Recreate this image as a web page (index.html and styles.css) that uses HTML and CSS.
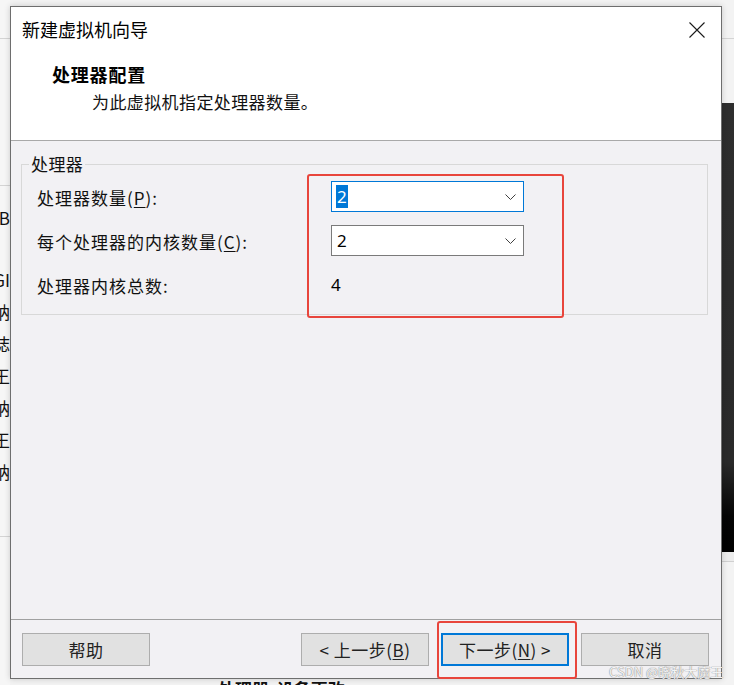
FILE: index.html
```html
<!DOCTYPE html>
<html lang="zh-CN">
<head>
<meta charset="utf-8">
<title>新建虚拟机向导</title>
<link rel="stylesheet" href="styles.css">
</head>
<body>
<div class="desktop">
  <div class="bg">
    <div class="bg-left">
      <div class="seg seg-a"></div>
      <div class="seg seg-b"></div>
      <div class="frag frag-first"><span>内存 8 GB</span></div>
      <div class="frag frag-gap"><span>硬盘 20 GI</span></div>
      <div class="frag"><span>处理器呐</span></div>
      <div class="frag"><span>网络连接梽</span></div>
      <div class="frag"><span>处理器王</span></div>
      <div class="frag"><span>声卡呐</span></div>
      <div class="frag"><span>显示王</span></div>
      <div class="frag"><span>打印机呐</span></div>
      <div class="seg seg-c"></div>
    </div>
    <div class="bg-mid">
      <div class="bg-bottom-text">处理器&nbsp;&nbsp;设备更改</div>
    </div>
    <div class="bg-right">
      <div class="seg seg-a"></div>
      <div class="rseg-light"></div>
      <div class="rseg-dark"></div>
      <div class="rseg-low"></div>
    </div>
  </div>

  <div class="dialog">
    <header class="dlg-header">
      <div class="titlebar">
        <span class="title">新建虚拟机向导</span>
        <svg class="close" width="16" height="16" viewBox="0 0 16 16" aria-label="关闭">
          <path d="M0.5 0.5 L15.5 15.5 M15.5 0.5 L0.5 15.5" stroke="#1a1a1a" stroke-width="1.1" fill="none"/>
        </svg>
      </div>
      <div class="heading">处理器配置</div>
      <div class="subtitle">为此虚拟机指定处理器数量。</div>
    </header>

    <main class="dlg-body">
      <fieldset class="group">
        <legend>处理器</legend>
        <div class="rows">
          <div class="label">处理器数量(<u>P</u>):</div>
          <div class="combo focused">
            <span class="sel">2</span>
            <svg class="chev" width="11" height="6" viewBox="0 0 11 6"><path d="M0.5 0.5 L5.5 5.5 L10.5 0.5" stroke="#404040" stroke-width="1" fill="none"/></svg>
          </div>
          <div class="label">每个处理器的内核数量(<u>C</u>):</div>
          <div class="combo">
            <span class="val">2</span>
            <svg class="chev" width="11" height="6" viewBox="0 0 11 6"><path d="M0.5 0.5 L5.5 5.5 L10.5 0.5" stroke="#404040" stroke-width="1" fill="none"/></svg>
          </div>
          <div class="label">处理器内核总数:</div>
          <div class="total">4</div>
        </div>
      </fieldset>
    </main>

    <footer class="dlg-footer">
      <button class="btn btn-help">帮助</button>
      <button class="btn btn-back">&lt; 上一步(<u>B</u>)</button>
      <button class="btn btn-next">下一步(<u>N</u>) &gt;</button>
      <button class="btn btn-cancel">取消</button>
    </footer>
  </div>

  <div class="mark mark-combo"></div>
  <div class="mark mark-next"></div>
  <div class="watermark">CSDN @晓秋大魔王</div>
</div>
</body>
</html>
```

FILE: styles.css
```css
* { box-sizing: border-box; }

html, body {
  margin: 0;
  padding: 0;
}

body {
  font-family: "Noto Sans CJK SC", "Noto Sans", sans-serif;
  color: #000;
  background: #f3f3f3;
}

.desktop {
  position: relative;
  width: 734px;
  height: 685px;
  overflow: hidden;
  background: #f3f3f3;
}

/* ---------- background window behind the dialog ---------- */
.bg {
  display: grid;
  grid-template-columns: 10px 1fr 12px;
  height: 685px;
}

.bg-left {
  display: flex;
  flex-direction: column;
  overflow: hidden;
  background: #f6f6f6;
}

.seg { flex: none; }
.seg-a { height: 39px; border-bottom: 1px solid #d4d4d4; }
.seg-b { height: 147px; border-bottom: 1px solid #d4d4d4; }
.seg-c { margin-top: 48px; border-bottom: 1px solid #d4d4d4; }

.frag {
  display: flex;
  justify-content: flex-end;
  white-space: nowrap;
  font-size: 17px;
  line-height: 32px;
  height: 32px;
  color: #111;
}
.frag-first { margin-top: 16px; }
.frag-gap { margin-top: 30px; }

.bg-mid {
  display: flex;
  flex-direction: column;
  justify-content: flex-end;
}

.bg-bottom-text {
  margin-left: 208px;
  font-size: 17px;
  font-weight: bold;
  line-height: 20px;
  margin-bottom: -14px;
  color: #111;
  white-space: nowrap;
}

.bg-right {
  display: flex;
  flex-direction: column;
  background: #f3f3f3;
}
.rseg-light { height: 64px; flex: none; }
.rseg-dark {
  height: 449px;
  flex: none;
  background: linear-gradient(#2e2e2e 0%, #2a2a2a 80%, #050505 92%, #000 100%);
}
.rseg-low {
  flex: none;
  height: 10px;
  border-bottom: 1px solid #d0d0d0;
  background: #ececec;
}

/* ---------- dialog window ---------- */
.dialog {
  position: absolute;
  left: 10px;
  top: 6px;
  width: 712px;
  height: 673px;
  border: 1px solid #6e6e6e;
  display: flex;
  flex-direction: column;
  background: #f2f1f4;
  box-shadow: 0 0 6px rgba(0, 0, 0, 0.18);
}

.dlg-header {
  flex: none;
  height: 134px;
  background: #fff;
  border-bottom: 1px solid #a9a9a9;
  padding: 11px 16px 0 11px;
}

.titlebar {
  display: flex;
  justify-content: space-between;
  align-items: center;
  height: 22px;
}

.title {
  font-size: 18px;
  line-height: 22px;
  color: #000;
}

.close { display: block; margin-top: 1px; }

.heading {
  margin: 23px 0 0 30px;
  font-size: 18px;
  line-height: 22px;
  font-weight: bold;
  letter-spacing: 0.8px;
}

.subtitle {
  margin: 6px 0 0 70px;
  font-size: 17px;
  line-height: 22px;
  letter-spacing: 0.4px;
  color: #111;
}

.dlg-body {
  flex: 1;
  padding: 13px 13px 0 10px;
}

.group {
  margin: 0;
  border: 1px solid #d8d8d8;
  padding: 7px 0 14px 15px;
  min-width: 0;
}

.group legend {
  margin-left: -8px;
  padding: 0 2px;
  font-size: 17px;
  line-height: 20px;
  letter-spacing: 0.4px;
  color: #111;
}

.rows {
  display: grid;
  grid-template-columns: 294px 193px;
  grid-auto-rows: 31px;
  row-gap: 13px;
  align-items: center;
}

.label {
  font-size: 17px;
  line-height: 22px;
  letter-spacing: 1px;
  color: #111;
  padding-top: 3px;
}

.label u, .btn u { text-underline-offset: 2px; }

.combo {
  height: 31px;
  border: 1px solid #7a7a7a;
  background: #fff;
  display: flex;
  align-items: center;
  justify-content: space-between;
  padding: 0 7px 0 4px;
  font-family: "Noto Sans", "Open Sans", sans-serif;
  font-size: 17px;
}

.combo.focused { border-color: #0078d7; }

.sel {
  background: #0078d7;
  color: #fff;
  height: 23px;
  line-height: 23px;
  padding: 0 1px;
}

.val { line-height: 23px; padding-left: 1px; }

.chev { display: block; margin-top: 1px; }

.total {
  font-family: "Noto Sans", "Open Sans", sans-serif;
  font-size: 17px;
  line-height: 22px;
}

.dlg-footer {
  flex: none;
  height: 59px;
  border-top: 1px solid #a0a0a0;
  display: flex;
  align-items: flex-start;
  padding: 13px 12px 0 11px;
}

.btn {
  width: 128px;
  height: 33px;
  margin: 0;
  border: 1px solid #adadad;
  background: #e1e1e1;
  font-family: "Noto Sans CJK SC", "Noto Sans", sans-serif;
  font-size: 17px;
  color: #222;
  padding: 0;
  letter-spacing: 0.5px;
}

.btn-back { margin-left: auto; }
.btn-next {
  margin-left: 12px;
  border: 2px solid #0078d7;
}
.btn-cancel { margin-left: 12px; }

/* ---------- annotation overlays ---------- */
.mark {
  position: absolute;
  border: 2px solid #e8453c;
  border-radius: 3px;
}
.mark-combo { left: 307px; top: 174px; width: 257px; height: 144px; }
.mark-next { left: 437px; top: 621px; width: 140px; height: 58px; }

.watermark {
  position: absolute;
  left: 609px;
  top: 663px;
  font-size: 13px;
  line-height: 18px;
  color: rgba(255, 255, 255, 0.92);
  text-shadow: 0 0 1px #8a8a8a, 0 0 1px #8a8a8a;
  white-space: nowrap;
}
```
